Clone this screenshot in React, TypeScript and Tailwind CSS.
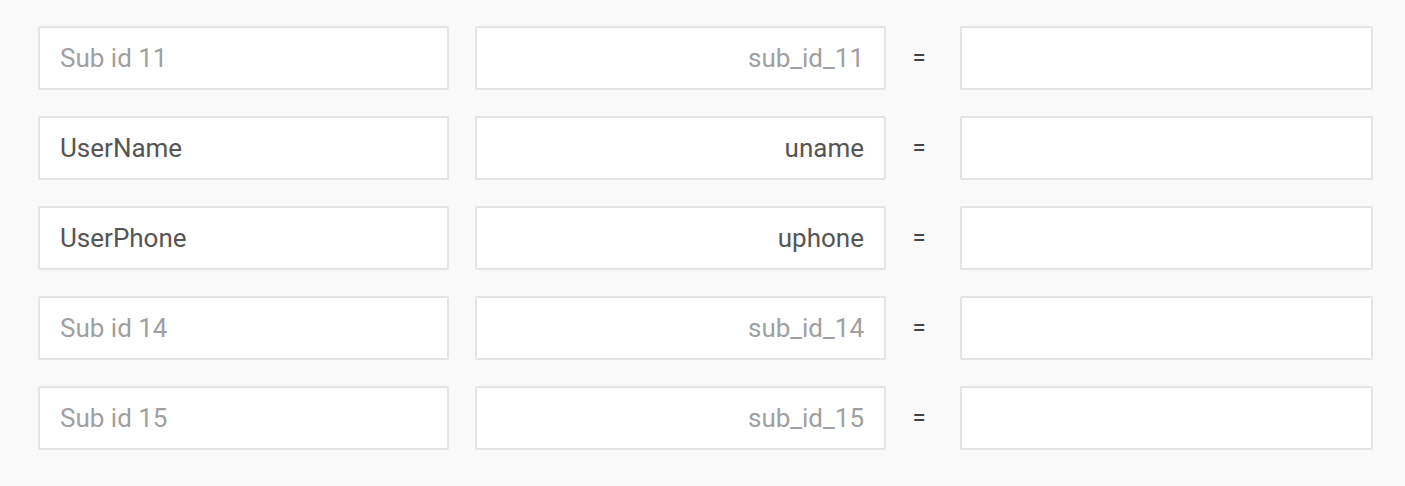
import React from 'react';

interface Row {
  label: string;
  labelFilled: boolean;
  param: string;
  paramFilled: boolean;
}

const rows: Row[] = [
  { label: 'Sub id 11', labelFilled: false, param: 'sub_id_11', paramFilled: false },
  { label: 'UserName', labelFilled: true, param: 'uname', paramFilled: true },
  { label: 'UserPhone', labelFilled: true, param: 'uphone', paramFilled: true },
  { label: 'Sub id 14', labelFilled: false, param: 'sub_id_14', paramFilled: false },
  { label: 'Sub id 15', labelFilled: false, param: 'sub_id_15', paramFilled: false },
];

export default function App() {
  return (
    <div className="min-h-[486px] w-full bg-[#f9f9f9] pt-[26px] pl-[38px] font-['Roboto',sans-serif]">
      <div className="flex flex-col gap-[26px]">
        {rows.map(r => (
          <div key={r.param} className="flex items-center">
            <div
              className={`flex h-[64px] w-[411px] items-center rounded-[2px] border-2 border-[#e4e4e4] bg-white px-[20px] text-[26px] ${
                r.labelFilled ? 'text-[#555555]' : 'text-[#a0a0a0]'
              }`}
            >
              {r.label}
            </div>
            <div
              className={`ml-[26px] flex h-[64px] w-[411px] items-center justify-end rounded-[2px] border-2 border-[#e4e4e4] bg-white px-[20px] text-[26px] ${
                r.paramFilled ? 'text-[#555555]' : 'text-[#a0a0a0]'
              }`}
            >
              {r.param}
            </div>
            <div className="flex w-[66px] justify-center text-[24px] text-[#444444]">=</div>
            <div className="ml-[8px] h-[64px] w-[413px] rounded-[2px] border-2 border-[#e4e4e4] bg-white" />
          </div>
        ))}
      </div>
    </div>
  );
}
